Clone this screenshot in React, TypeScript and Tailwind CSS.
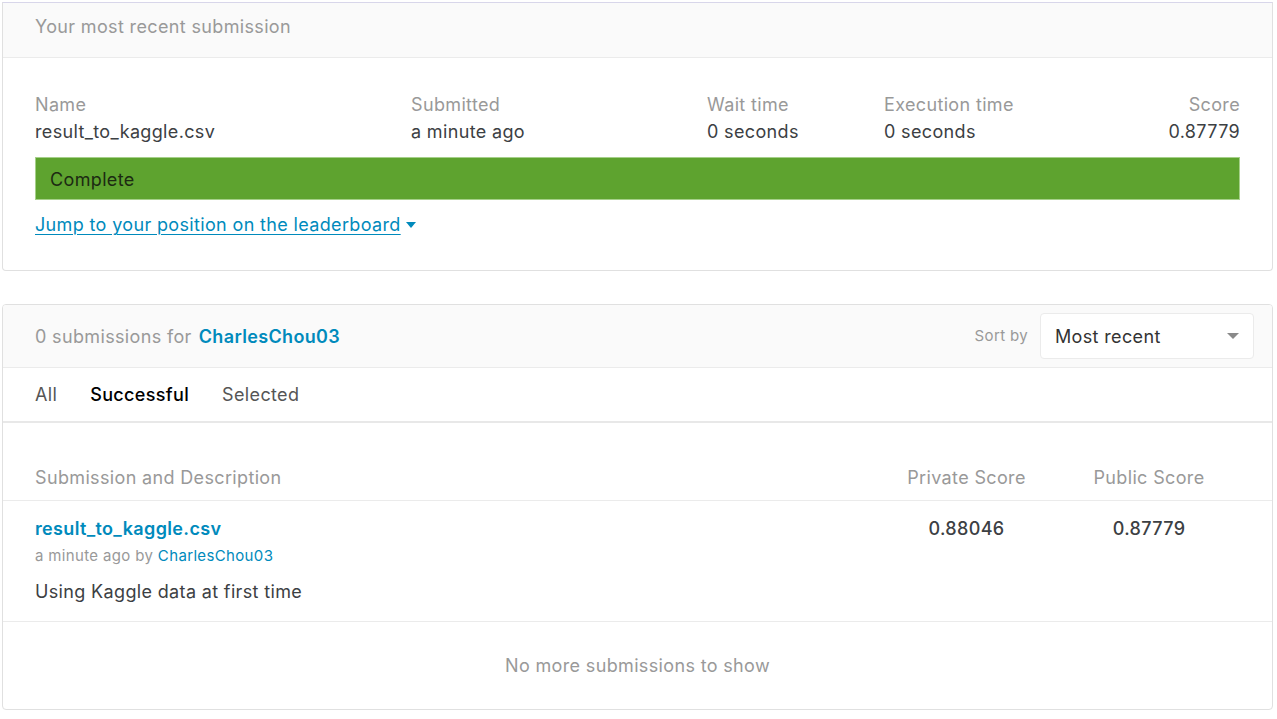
import React from 'react';

const font = { fontFamily: 'Inter, "Noto Sans", sans-serif' };

function Stat({ label, value, right }: { label: string; value: string; right?: boolean }) {
  return (
    <div className={right ? 'text-right' : ''}>
      <div className="text-[18px] leading-[27px] text-[#999]">{label}</div>
      <div className="text-[18px] leading-[27px] text-[#3c4043]">{value}</div>
    </div>
  );
}

export default function App() {
  return (
    <div className="min-h-screen bg-white pt-[2px] pl-[2px] text-[#3c4043] tracking-[0.35px]" style={font}>
      {/* most recent submission */}
      <div className="w-[1271px] rounded-b-[4px] border border-[#e0e0e0] border-t-[#d8d6ea]">
        <div className="h-[55px] bg-[#fafafa] border-b border-[#ebebeb] px-[32px] pt-[10px]">
          <span className="text-[18px] leading-[27px] text-[#999]">Your most recent submission</span>
        </div>
        <div className="px-[32px] pt-[33px] pb-[32px]">
          <div className="flex">
            <div className="w-[376px]"><Stat label="Name" value="result_to_kaggle.csv" /></div>
            <div className="w-[296px]"><Stat label="Submitted" value="a minute ago" /></div>
            <div className="w-[177px]"><Stat label="Wait time" value="0 seconds" /></div>
            <div className="w-[200px]"><Stat label="Execution time" value="0 seconds" /></div>
            <div className="flex-1"><Stat label="Score" value="0.87779" right /></div>
          </div>
          <div className="mt-[12px] h-[43px] bg-[#5ea32f] border border-[#a6d08a] flex items-center px-[14px] pt-[1px]">
            <span className="text-[18px] text-[#1c2a12]">Complete</span>
          </div>
          <div className="mt-[11px]">
            <a className="text-[18px] text-[#008abc] underline underline-offset-[3px] decoration-1 inline-flex items-center gap-[5px]">
              Jump to your position on the leaderboard
              <svg width="10" height="6" viewBox="0 0 10 6"><path d="M0 0h10L5 6z" fill="#008abc" /></svg>
            </a>
          </div>
        </div>
      </div>

      {/* submissions list */}
      <div className="mt-[33px] w-[1271px] rounded-[4px] border border-[#e0e0e0] overflow-hidden">
        <div className="h-[63px] bg-[#fafafa] border-b border-[#ebebeb] pl-[32px] pr-[18px] flex items-center">
          <span className="text-[18px] text-[#999]">0 submissions for</span>
          <span className="ml-[7px] text-[18px] font-semibold text-[#008abc]">CharlesChou03</span>
          <div className="ml-auto flex items-center">
            <span className="text-[15px] text-[#999] mr-[12px]">Sort by</span>
            <div className="w-[214px] h-[46px] bg-white border border-[#ebebeb] rounded-[4px] flex items-center pl-[14px] pr-[14px]">
              <span className="text-[18px] text-[#333]">Most recent</span>
              <svg className="ml-auto" width="12" height="6" viewBox="0 0 12 6"><path d="M0 0h12L6 6z" fill="#8a8a8a" /></svg>
            </div>
          </div>
        </div>
        <div className="h-[55px] border-b-2 border-[#e8e8e8] px-[32px] flex items-center gap-[33px] text-[18px]">
          <span className="text-[#555]">All</span>
          <span className="text-black font-medium">Successful</span>
          <span className="text-[#555]">Selected</span>
        </div>
        <div className="h-[78px] border-b border-[#ebebeb] px-[32px] pt-[41px] flex items-start text-[18px] leading-[27px] text-[#999]">
          <span>Submission and Description</span>
          <span className="ml-auto w-[185px] text-center">Private Score</span>
          <span className="w-[180px] text-center mr-[1px]">Public Score</span>
        </div>
        <div className="h-[121px] border-b border-[#ebebeb] px-[32px] pt-[14px] flex items-start">
          <div className="flex-1">
            <div className="text-[18px] leading-[27px] font-semibold text-[#008abc]">result_to_kaggle.csv</div>
            <div className="text-[15px] leading-[28px] text-[#999]">
              a minute ago by <span className="text-[#008abc]">CharlesChou03</span>
            </div>
            <div className="mt-[8px] text-[18px] leading-[27px] text-[#3c4043]">Using Kaggle data at first time</div>
          </div>
          <span className="w-[185px] text-center text-[18px] leading-[27px] font-medium text-[#3c4043] ml-[3px]">0.88046</span>
          <span className="w-[180px] text-center text-[18px] leading-[27px] font-medium text-[#3c4043] mr-[1px]">0.87779</span>
        </div>
        <div className="h-[87px] flex items-center justify-center text-[18px] text-[#999]">
          No more submissions to show
        </div>
      </div>
    </div>
  );
}
